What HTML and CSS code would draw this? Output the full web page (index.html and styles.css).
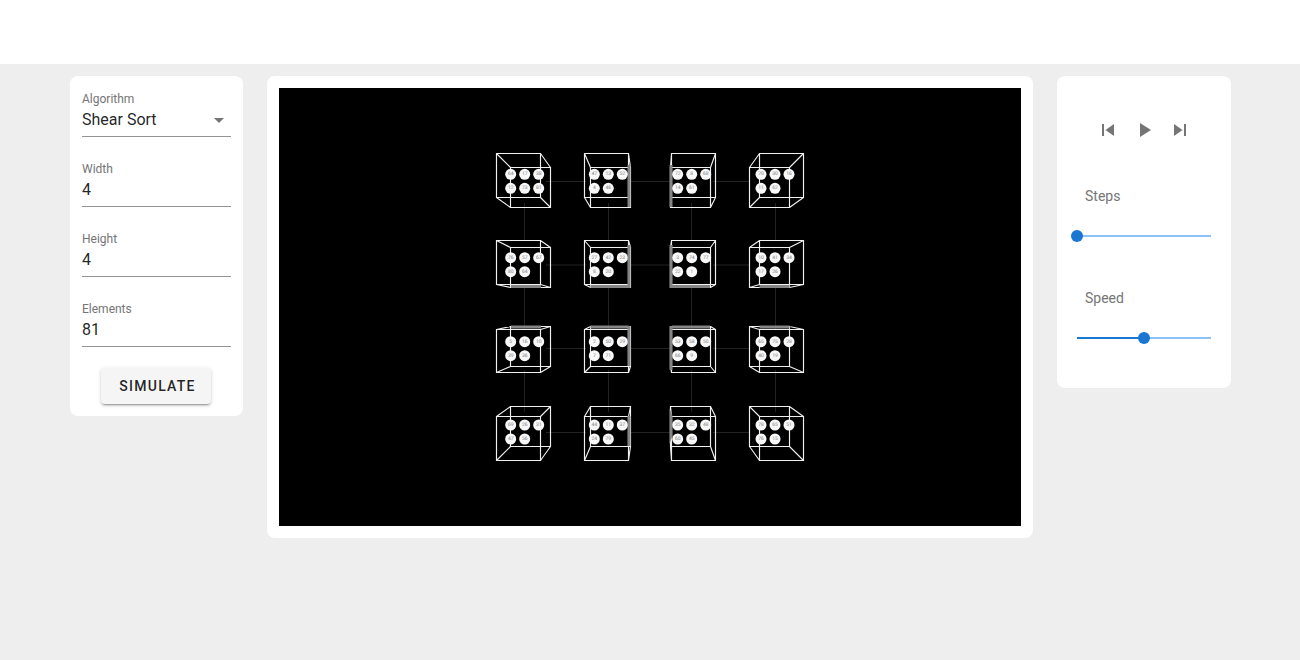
FILE: index.html
```html
<!DOCTYPE html>
<html lang="en">
<head>
<meta charset="utf-8">
<title>Shear Sort</title>
<link rel="stylesheet" href="styles.css">
</head>
<body>
<header class="topbar"></header>
<main class="app">
  <section class="panel form-panel">
    <div class="field">
      <span class="field-label">Algorithm</span>
      <span class="field-value">Shear Sort</span>
      <svg class="select-arrow" viewBox="0 0 24 24"><path d="M7 10l5 5 5-5z"/></svg>
    </div>
    <div class="field"><span class="field-label">Width</span><span class="field-value">4</span></div>
    <div class="field"><span class="field-label">Height</span><span class="field-value">4</span></div>
    <div class="field"><span class="field-label">Elements</span><span class="field-value">81</span></div>
    <button class="simulate">SIMULATE</button>
  </section>

  <section class="panel stage-panel">
    <svg class="stage" viewBox="279 88 742 438" width="742" height="438">
      <path class="wire" d="M546 181.5H586M629 181.5H672M713 181.5H750M546 265H586M629 265H672M713 265H750M546 348.5H586M629 348.5H672M713 348.5H750M546 432.5H586M629 432.5H672M713 432.5H750"/>
      <path class="wire" d="M524.5 203V241M524.5 286V330M524.5 370V412M608.5 203V241M608.5 286V330M608.5 370V412M691.5 203V241M691.5 286V330M691.5 370V412M775.5 203V241M775.5 286V330M775.5 370V412"/>

      <path class="edge" d="M496.5 153.5H540.5V197.5H496.5ZM510.5 167.5H550.5V207.5H510.5ZM496.5 153.5L510.5 167.5M540.5 153.5L550.5 167.5M540.5 197.5L550.5 207.5M496.5 197.5L510.5 207.5"/>
      <path class="edge" d="M584.5 153.5H628.5V197.5H584.5ZM590.5 167.5H630.5V207.5H590.5ZM584.5 153.5L590.5 167.5M628.5 153.5L630.5 167.5M628.5 197.5L630.5 207.5M584.5 197.5L590.5 207.5"/>
      <path class="edge" d="M671.5 153.5H715.5V197.5H671.5ZM670.5 167.5H710.5V207.5H670.5ZM671.5 153.5L670.5 167.5M715.5 153.5L710.5 167.5M715.5 197.5L710.5 207.5M671.5 197.5L670.5 207.5"/>
      <path class="edge" d="M759.5 153.5H803.5V197.5H759.5ZM749.5 167.5H789.5V207.5H749.5ZM759.5 153.5L749.5 167.5M803.5 153.5L789.5 167.5M803.5 197.5L789.5 207.5M759.5 197.5L749.5 207.5"/>

      <path class="edge" d="M496.5 240.5H540.5V284.5H496.5ZM510.5 247.5H550.5V287.5H510.5ZM496.5 240.5L510.5 247.5M540.5 240.5L550.5 247.5M540.5 284.5L550.5 287.5M496.5 284.5L510.5 287.5"/>
      <path class="edge" d="M584.5 240.5H628.5V284.5H584.5ZM590.5 247.5H630.5V287.5H590.5ZM584.5 240.5L590.5 247.5M628.5 240.5L630.5 247.5M628.5 284.5L630.5 287.5M584.5 284.5L590.5 287.5"/>
      <path class="edge" d="M671.5 240.5H715.5V284.5H671.5ZM670.5 247.5H710.5V287.5H670.5ZM671.5 240.5L670.5 247.5M715.5 240.5L710.5 247.5M715.5 284.5L710.5 287.5M671.5 284.5L670.5 287.5"/>
      <path class="edge" d="M759.5 240.5H803.5V284.5H759.5ZM749.5 247.5H789.5V287.5H749.5ZM759.5 240.5L749.5 247.5M803.5 240.5L789.5 247.5M803.5 284.5L789.5 287.5M759.5 284.5L749.5 287.5"/>

      <path class="edge" d="M496.5 329.5H540.5V372.5H496.5ZM510.5 326.5H550.5V366.5H510.5ZM496.5 329.5L510.5 326.5M540.5 329.5L550.5 326.5M540.5 372.5L550.5 366.5M496.5 372.5L510.5 366.5"/>
      <path class="edge" d="M584.5 329.5H628.5V372.5H584.5ZM590.5 326.5H630.5V366.5H590.5ZM584.5 329.5L590.5 326.5M628.5 329.5L630.5 326.5M628.5 372.5L630.5 366.5M584.5 372.5L590.5 366.5"/>
      <path class="edge" d="M671.5 329.5H715.5V372.5H671.5ZM670.5 326.5H710.5V366.5H670.5ZM671.5 329.5L670.5 326.5M715.5 329.5L710.5 326.5M715.5 372.5L710.5 366.5M671.5 372.5L670.5 366.5"/>
      <path class="edge" d="M759.5 329.5H803.5V372.5H759.5ZM749.5 326.5H789.5V366.5H749.5ZM759.5 329.5L749.5 326.5M803.5 329.5L789.5 326.5M803.5 372.5L789.5 366.5M759.5 372.5L749.5 366.5"/>

      <path class="edge" d="M496.5 416.5H540.5V460.5H496.5ZM510.5 406.5H550.5V446.5H510.5ZM496.5 416.5L510.5 406.5M540.5 416.5L550.5 406.5M540.5 460.5L550.5 446.5M496.5 460.5L510.5 446.5"/>
      <path class="edge" d="M584.5 416.5H628.5V460.5H584.5ZM590.5 406.5H630.5V446.5H590.5ZM584.5 416.5L590.5 406.5M628.5 416.5L630.5 406.5M628.5 460.5L630.5 446.5M584.5 460.5L590.5 446.5"/>
      <path class="edge" d="M671.5 416.5H715.5V460.5H671.5ZM670.5 406.5H710.5V446.5H670.5ZM671.5 416.5L670.5 406.5M715.5 416.5L710.5 406.5M715.5 460.5L710.5 446.5M671.5 460.5L670.5 446.5"/>
      <path class="edge" d="M759.5 416.5H803.5V460.5H759.5ZM749.5 406.5H789.5V446.5H749.5ZM759.5 416.5L749.5 406.5M803.5 416.5L789.5 406.5M803.5 460.5L789.5 446.5M759.5 460.5L749.5 446.5"/>

      <path class="strip" d="M627.5 165h3v42h-3zM669.5 165h3v42h-3zM511 285h30v3h-30zM590.5 285h38v3h-38zM627.5 245h3v43h-3zM672 285h38v3h-38zM669.5 245h3v43h-3zM759.5 285h30v3h-30zM511 325.5h30v3h-30zM590.5 325.5h38v3h-38zM627.5 326h3v40h-3zM672 325.5h38v3h-38zM669.5 326h3v44h-3zM759.5 325.5h30v3h-30zM627.5 416h3v30h-3zM669.5 408l3 8v20l-3 8z"/>

      <g class="node"><circle cx="510.7" cy="174.3" r="5.5"/><text x="510.7" y="174.3">64</text></g>
      <g class="node"><circle cx="524.7" cy="174.3" r="5.5"/><text x="524.7" y="174.3">17</text></g>
      <g class="node"><circle cx="538.7" cy="174.3" r="5.5"/><text x="538.7" y="174.3">38</text></g>
      <g class="node"><circle cx="510.7" cy="188.3" r="5.5"/><text x="510.7" y="188.3">12</text></g>
      <g class="node"><circle cx="524.7" cy="188.3" r="5.5"/><text x="524.7" y="188.3">73</text></g>
      <g class="node"><circle cx="538.7" cy="188.3" r="5.5"/><text x="538.7" y="188.3">81</text></g>

      <g class="node"><circle cx="594.3" cy="174.3" r="5.5"/><text x="594.3" y="174.3">47</text></g>
      <g class="node"><circle cx="608.3" cy="174.3" r="5.5"/><text x="608.3" y="174.3">13</text></g>
      <g class="node"><circle cx="622.3" cy="174.3" r="5.5"/><text x="622.3" y="174.3">52</text></g>
      <g class="node"><circle cx="594.3" cy="188.3" r="5.5"/><text x="594.3" y="188.3">4</text></g>
      <g class="node"><circle cx="608.3" cy="188.3" r="5.5"/><text x="608.3" y="188.3">46</text></g>

      <g class="node"><circle cx="677.7" cy="174.3" r="5.5"/><text x="677.7" y="174.3">72</text></g>
      <g class="node"><circle cx="691.7" cy="174.3" r="5.5"/><text x="691.7" y="174.3">8</text></g>
      <g class="node"><circle cx="705.7" cy="174.3" r="5.5"/><text x="705.7" y="174.3">68</text></g>
      <g class="node"><circle cx="677.7" cy="188.3" r="5.5"/><text x="677.7" y="188.3">14</text></g>
      <g class="node"><circle cx="691.7" cy="188.3" r="5.5"/><text x="691.7" y="188.3">61</text></g>

      <g class="node"><circle cx="761" cy="174.3" r="5.5"/><text x="761" y="174.3">70</text></g>
      <g class="node"><circle cx="775" cy="174.3" r="5.5"/><text x="775" y="174.3">30</text></g>
      <g class="node"><circle cx="789" cy="174.3" r="5.5"/><text x="789" y="174.3">16</text></g>
      <g class="node"><circle cx="761" cy="188.3" r="5.5"/><text x="761" y="188.3">11</text></g>
      <g class="node"><circle cx="775" cy="188.3" r="5.5"/><text x="775" y="188.3">62</text></g>

      <g class="node"><circle cx="510.7" cy="257.7" r="5.5"/><text x="510.7" y="257.7">76</text></g>
      <g class="node"><circle cx="524.7" cy="257.7" r="5.5"/><text x="524.7" y="257.7">57</text></g>
      <g class="node"><circle cx="538.7" cy="257.7" r="5.5"/><text x="538.7" y="257.7">67</text></g>
      <g class="node"><circle cx="510.7" cy="271.7" r="5.5"/><text x="510.7" y="271.7">80</text></g>
      <g class="node"><circle cx="524.7" cy="271.7" r="5.5"/><text x="524.7" y="271.7">64</text></g>

      <g class="node"><circle cx="594.3" cy="257.7" r="5.5"/><text x="594.3" y="257.7">27</text></g>
      <g class="node"><circle cx="608.3" cy="257.7" r="5.5"/><text x="608.3" y="257.7">42</text></g>
      <g class="node"><circle cx="622.3" cy="257.7" r="5.5"/><text x="622.3" y="257.7">23</text></g>
      <g class="node"><circle cx="594.3" cy="271.7" r="5.5"/><text x="594.3" y="271.7">8</text></g>
      <g class="node"><circle cx="608.3" cy="271.7" r="5.5"/><text x="608.3" y="271.7">20</text></g>

      <g class="node"><circle cx="677.7" cy="257.7" r="5.5"/><text x="677.7" y="257.7">3</text></g>
      <g class="node"><circle cx="691.7" cy="257.7" r="5.5"/><text x="691.7" y="257.7">74</text></g>
      <g class="node"><circle cx="705.7" cy="257.7" r="5.5"/><text x="705.7" y="257.7">77</text></g>
      <g class="node"><circle cx="677.7" cy="271.7" r="5.5"/><text x="677.7" y="271.7">22</text></g>
      <g class="node"><circle cx="691.7" cy="271.7" r="5.5"/><text x="691.7" y="271.7">1</text></g>

      <g class="node"><circle cx="761" cy="257.7" r="5.5"/><text x="761" y="257.7">10</text></g>
      <g class="node"><circle cx="775" cy="257.7" r="5.5"/><text x="775" y="257.7">41</text></g>
      <g class="node"><circle cx="789" cy="257.7" r="5.5"/><text x="789" y="257.7">34</text></g>
      <g class="node"><circle cx="761" cy="271.7" r="5.5"/><text x="761" y="271.7">17</text></g>
      <g class="node"><circle cx="775" cy="271.7" r="5.5"/><text x="775" y="271.7">26</text></g>

      <g class="node"><circle cx="510.7" cy="341.7" r="5.5"/><text x="510.7" y="341.7">5</text></g>
      <g class="node"><circle cx="524.7" cy="341.7" r="5.5"/><text x="524.7" y="341.7">16</text></g>
      <g class="node"><circle cx="538.7" cy="341.7" r="5.5"/><text x="538.7" y="341.7">10</text></g>
      <g class="node"><circle cx="510.7" cy="355.7" r="5.5"/><text x="510.7" y="355.7">39</text></g>
      <g class="node"><circle cx="524.7" cy="355.7" r="5.5"/><text x="524.7" y="355.7">36</text></g>

      <g class="node"><circle cx="594.3" cy="341.7" r="5.5"/><text x="594.3" y="341.7">2</text></g>
      <g class="node"><circle cx="608.3" cy="341.7" r="5.5"/><text x="608.3" y="341.7">50</text></g>
      <g class="node"><circle cx="622.3" cy="341.7" r="5.5"/><text x="622.3" y="341.7">29</text></g>
      <g class="node"><circle cx="594.3" cy="355.7" r="5.5"/><text x="594.3" y="355.7">7</text></g>
      <g class="node"><circle cx="608.3" cy="355.7" r="5.5"/><text x="608.3" y="355.7">71</text></g>

      <g class="node"><circle cx="677.7" cy="341.7" r="5.5"/><text x="677.7" y="341.7">53</text></g>
      <g class="node"><circle cx="691.7" cy="341.7" r="5.5"/><text x="691.7" y="341.7">58</text></g>
      <g class="node"><circle cx="705.7" cy="341.7" r="5.5"/><text x="705.7" y="341.7">50</text></g>
      <g class="node"><circle cx="677.7" cy="355.7" r="5.5"/><text x="677.7" y="355.7">66</text></g>
      <g class="node"><circle cx="691.7" cy="355.7" r="5.5"/><text x="691.7" y="355.7">9</text></g>

      <g class="node"><circle cx="761" cy="341.7" r="5.5"/><text x="761" y="341.7">65</text></g>
      <g class="node"><circle cx="775" cy="341.7" r="5.5"/><text x="775" y="341.7">75</text></g>
      <g class="node"><circle cx="789" cy="341.7" r="5.5"/><text x="789" y="341.7">28</text></g>
      <g class="node"><circle cx="761" cy="355.7" r="5.5"/><text x="761" y="355.7">40</text></g>
      <g class="node"><circle cx="775" cy="355.7" r="5.5"/><text x="775" y="355.7">19</text></g>

      <g class="node"><circle cx="510.7" cy="425" r="5.5"/><text x="510.7" y="425">69</text></g>
      <g class="node"><circle cx="524.7" cy="425" r="5.5"/><text x="524.7" y="425">26</text></g>
      <g class="node"><circle cx="538.7" cy="425" r="5.5"/><text x="538.7" y="425">31</text></g>
      <g class="node"><circle cx="510.7" cy="439" r="5.5"/><text x="510.7" y="439">47</text></g>
      <g class="node"><circle cx="524.7" cy="439" r="5.5"/><text x="524.7" y="439">56</text></g>

      <g class="node"><circle cx="594.3" cy="425" r="5.5"/><text x="594.3" y="425">44</text></g>
      <g class="node"><circle cx="608.3" cy="425" r="5.5"/><text x="608.3" y="425">11</text></g>
      <g class="node"><circle cx="622.3" cy="425" r="5.5"/><text x="622.3" y="425">37</text></g>
      <g class="node"><circle cx="594.3" cy="439" r="5.5"/><text x="594.3" y="439">24</text></g>
      <g class="node"><circle cx="608.3" cy="439" r="5.5"/><text x="608.3" y="439">79</text></g>

      <g class="node"><circle cx="677.7" cy="425" r="5.5"/><text x="677.7" y="425">35</text></g>
      <g class="node"><circle cx="691.7" cy="425" r="5.5"/><text x="691.7" y="425">32</text></g>
      <g class="node"><circle cx="705.7" cy="425" r="5.5"/><text x="705.7" y="425">48</text></g>
      <g class="node"><circle cx="677.7" cy="439" r="5.5"/><text x="677.7" y="439">60</text></g>
      <g class="node"><circle cx="691.7" cy="439" r="5.5"/><text x="691.7" y="439">45</text></g>

      <g class="node"><circle cx="761" cy="425" r="5.5"/><text x="761" y="425">78</text></g>
      <g class="node"><circle cx="775" cy="425" r="5.5"/><text x="775" y="425">65</text></g>
      <g class="node"><circle cx="789" cy="425" r="5.5"/><text x="789" y="425">51</text></g>
      <g class="node"><circle cx="761" cy="439" r="5.5"/><text x="761" y="439">76</text></g>
      <g class="node"><circle cx="775" cy="439" r="5.5"/><text x="775" y="439">15</text></g>
    </svg>
  </section>

  <section class="panel control-panel">
    <div class="transport">
      <button class="icon-btn" aria-label="Previous"><svg viewBox="0 0 24 24"><path d="M6 6h2v12H6zm3.5 6l8.5 6V6z"/></svg></button>
      <button class="icon-btn" aria-label="Play"><svg viewBox="0 0 24 24"><path d="M8 5v14l11-7z"/></svg></button>
      <button class="icon-btn" aria-label="Next"><svg viewBox="0 0 24 24"><path d="M6 18l8.5-6L6 6v12zM16 6v12h2V6h-2z"/></svg></button>
    </div>
    <div class="slider-label">Steps</div>
    <div class="slider"><div class="slider-fill" style="width:0%"><span class="slider-thumb"></span></div></div>
    <div class="slider-label second">Speed</div>
    <div class="slider"><div class="slider-fill" style="width:50%"><span class="slider-thumb"></span></div></div>
  </section>
</main>
</body>
</html>
```
FILE: styles.css
```css
* { box-sizing: border-box; }

html, body { height: 100%; }

body {
  margin: 0;
  background: #eeeeee;
  font-family: Roboto, "Liberation Sans", sans-serif;
  overflow: hidden;
}

.topbar {
  height: 64px;
  background: #ffffff;
}

.app {
  display: flex;
  align-items: flex-start;
  gap: 24px;
  padding: 12px 69px 0 70px;
}

.panel {
  background: #ffffff;
  border-radius: 8px;
}

/* Form */
.form-panel {
  width: 173px;
  padding: 12px;
  display: flex;
  flex-direction: column;
  gap: 21px;
}

.field {
  position: relative;
  display: flex;
  flex-direction: column;
  height: 49px;
  padding-top: 4px;
  border-bottom: 1px solid #949494;
}

.field-label {
  font-size: 12px;
  line-height: 14px;
  color: #757575;
}

.field-value {
  margin-top: 4px;
  font-size: 16px;
  line-height: 19px;
  color: rgba(0, 0, 0, 0.87);
}

.select-arrow {
  position: absolute;
  right: 0;
  top: 20px;
  width: 24px;
  height: 24px;
  fill: #757575;
}

.simulate {
  align-self: center;
  width: 110px;
  height: 36px;
  margin-right: 1px;
  padding: 0 0 0 3px;
  border: 0;
  border-radius: 4px;
  background: #f5f5f5;
  font-family: inherit;
  font-size: 14px;
  font-weight: 500;
  letter-spacing: 1.25px;
  color: rgba(0, 0, 0, 0.87);
  box-shadow: 0 3px 1px -2px rgba(0, 0, 0, 0.2), 0 2px 2px 0 rgba(0, 0, 0, 0.14), 0 1px 5px 0 rgba(0, 0, 0, 0.12);
}

/* Stage */
.stage-panel {
  width: 766px;
  padding: 12px;
}

.stage {
  display: block;
  background: #000000;
}

.wire {
  fill: none;
  stroke: #222222;
  stroke-width: 1;
}

.strip {
  fill: #858585;
}

.edge {
  fill: none;
  stroke: #f0f0f0;
  stroke-width: 1.15;
}

.node circle {
  fill: #f8f8f8;
}

.node text {
  font-family: Roboto, "Liberation Sans", sans-serif;
  font-size: 5px;
  fill: #808080;
  text-anchor: middle;
  dominant-baseline: central;
  text-rendering: geometricPrecision;
}

/* Controls */
.control-panel {
  width: 174px;
  height: 312px;
  padding: 36px 20px 0;
}

.transport {
  display: flex;
  justify-content: center;
}

.icon-btn {
  width: 36px;
  height: 36px;
  padding: 6px;
  border: 0;
  background: none;
}

.icon-btn svg {
  display: block;
  width: 24px;
  height: 24px;
  fill: #757575;
}

.slider-label {
  margin-top: 38px;
  padding-left: 8px;
  font-size: 14px;
  line-height: 20px;
  color: #757575;
}

.slider-label.second {
  margin-top: 51px;
}

.slider {
  height: 2px;
  margin-top: 29px;
  background: #8cc2fa;
}

.slider-fill {
  position: relative;
  height: 2px;
  background: #1976d2;
}

.slider-thumb {
  position: absolute;
  right: -6px;
  top: -5px;
  width: 12px;
  height: 12px;
  border-radius: 50%;
  background: #1976d2;
}
```
